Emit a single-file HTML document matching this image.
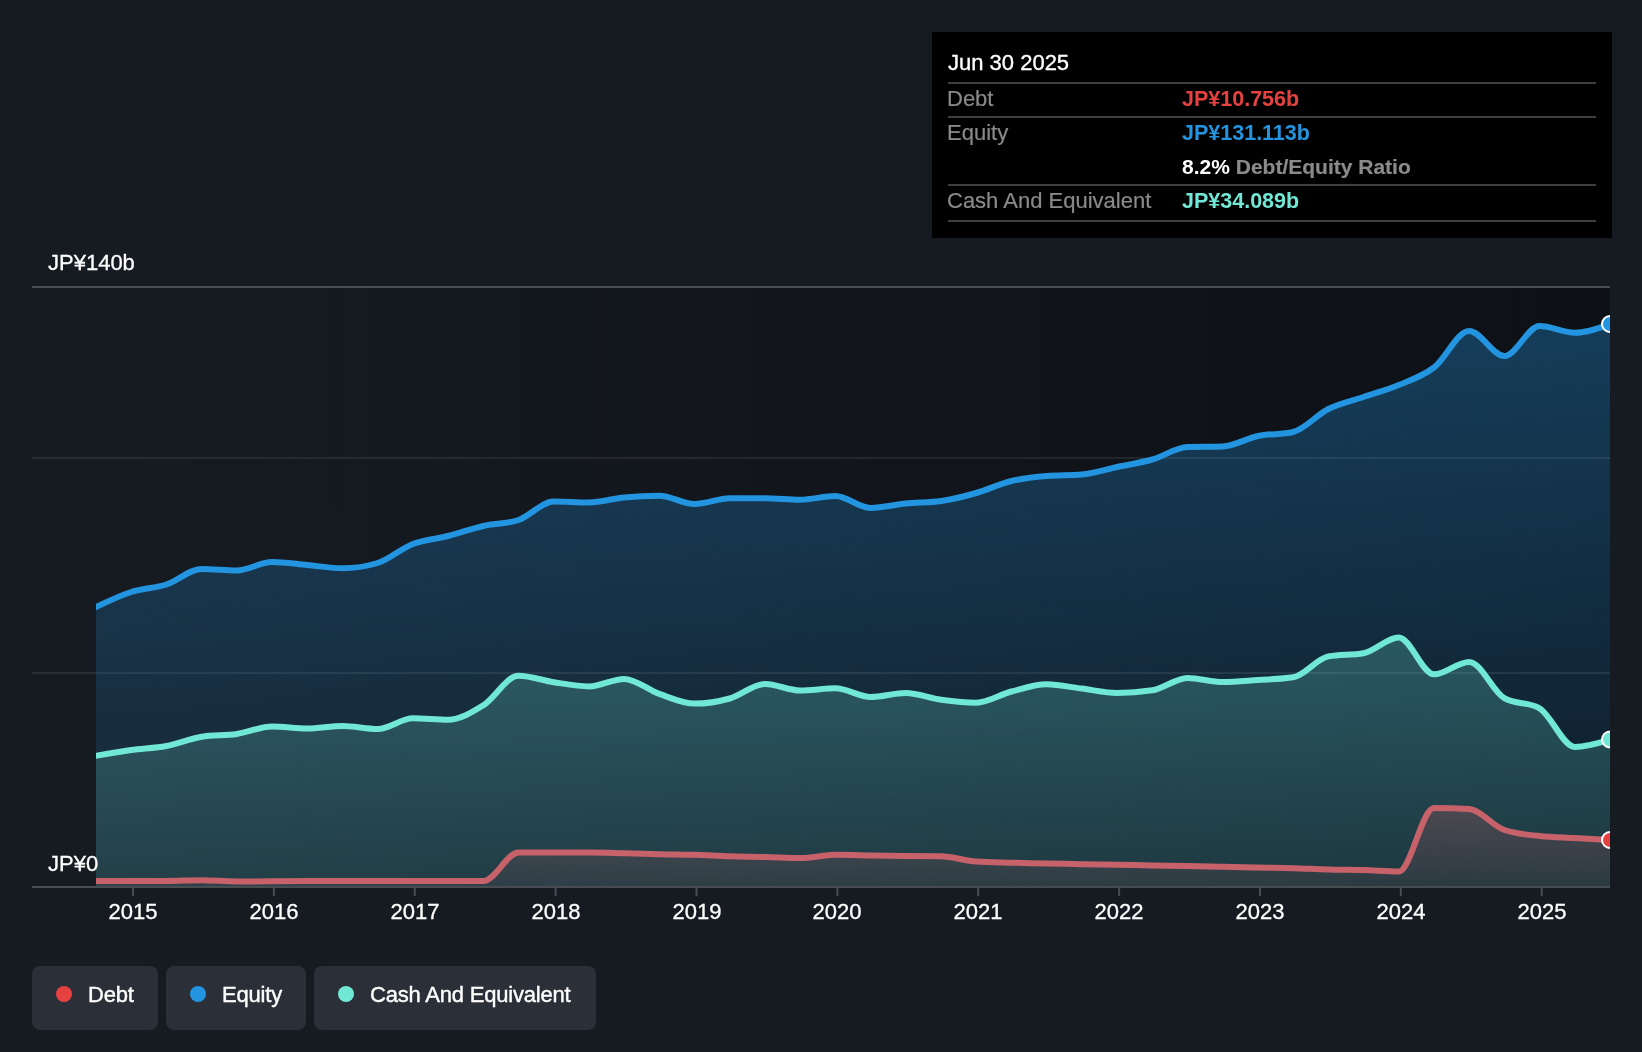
<!DOCTYPE html>
<html><head><meta charset="utf-8">
<style>
*{margin:0;padding:0;box-sizing:border-box}
html,body{width:1642px;height:1052px;overflow:hidden;background:#161b22;font-family:"Liberation Sans",sans-serif;color:#fff}
.lbl{position:absolute;white-space:nowrap;line-height:1;-webkit-text-stroke:0.3px #fff;will-change:transform}
.yl{font-size:22px;color:#fff}
.xl{font-size:22px;color:#fff;transform:translateX(-50%)}
.tt{position:absolute;left:932px;top:32px;width:680px;height:206px;background:#000}
.tt .sep{position:absolute;left:16px;width:648px;height:2px;background:#3f3f3f}
.tt .t{position:absolute;white-space:nowrap;line-height:1;font-size:22px;will-change:transform}
.g{color:#8a8a8a;-webkit-text-stroke:0.2px #8a8a8a}
.b{font-weight:bold}
.tt .v{font-size:21.5px}
.tt .r{font-size:21px}
.leg{position:absolute;top:966px;height:64px;background:#2b2f37;border-radius:8px}
.leg .dot{position:absolute;left:24px;top:20px;width:16px;height:16px;border-radius:50%}
.leg .t{position:absolute;left:56px;top:18px;font-size:22px;line-height:1;white-space:nowrap;-webkit-text-stroke:0.4px #fff;letter-spacing:-0.2px;will-change:transform}
</style></head><body>
<svg width="1642" height="1052" viewBox="0 0 1642 1052" style="position:absolute;left:0;top:0">
<defs>
<linearGradient id="pbg" x1="96" x2="1610" y1="0" y2="0" gradientUnits="userSpaceOnUse">
<stop offset="0" stop-color="#161b22"/><stop offset="1" stop-color="#0d1015"/></linearGradient>
<linearGradient id="geq" x1="0" x2="0" y1="324" y2="886" gradientUnits="userSpaceOnUse">
<stop offset="0" stop-color="#2394df" stop-opacity="0.34"/><stop offset="1" stop-color="#2394df" stop-opacity="0.08"/></linearGradient>
<linearGradient id="gcash" x1="0" x2="0" y1="637" y2="886" gradientUnits="userSpaceOnUse">
<stop offset="0" stop-color="#71e7d6" stop-opacity="0.24"/><stop offset="1" stop-color="#71e7d6" stop-opacity="0.135"/></linearGradient>
<linearGradient id="gdebt" x1="0" x2="0" y1="808" y2="886" gradientUnits="userSpaceOnUse">
<stop offset="0" stop-color="#8c505a" stop-opacity="0.40"/><stop offset="1" stop-color="#8c505a" stop-opacity="0.13"/></linearGradient>
<clipPath id="clip"><rect x="96" y="280" width="1514" height="606"/></clipPath>
</defs>
<rect x="96" y="288" width="1514" height="598" fill="url(#pbg)"/>
<g clip-path="url(#clip)">
<path d="M96.00,607.00C107.74,601.38,119.47,595.75,131.21,592.00C142.95,588.25,154.68,588.33,166.42,584.50C178.16,580.67,189.89,569.00,201.63,569.00C213.36,569.00,225.10,570.50,236.84,570.50C248.57,570.50,260.31,562.00,272.05,562.00C283.78,562.00,295.52,563.95,307.26,565.00C318.99,566.05,330.73,568.30,342.47,568.30C354.20,568.30,365.94,566.53,377.67,563.00C389.41,559.47,401.15,548.50,412.88,544.00C424.62,539.50,436.36,539.00,448.09,536.00C459.83,533.00,471.57,528.67,483.30,526.00C495.04,523.33,506.78,524.00,518.51,520.00C530.25,516.00,541.98,501.50,553.72,501.50C565.46,501.50,577.19,502.50,588.93,502.50C600.67,502.50,612.40,498.53,624.14,497.40C635.88,496.27,647.61,495.70,659.35,495.70C671.09,495.70,682.82,504.00,694.56,504.00C706.29,504.00,718.03,498.37,729.77,498.30C741.50,498.23,753.24,498.20,764.98,498.20C776.71,498.20,788.45,499.70,800.19,499.70C811.92,499.70,823.66,496.00,835.40,496.00C847.13,496.00,858.87,508.00,870.60,508.00C882.34,508.00,894.08,504.67,905.81,503.50C917.55,502.33,929.29,502.67,941.02,501.00C952.76,499.33,964.50,496.33,976.23,493.00C987.97,489.67,999.71,483.83,1011.44,481.00C1023.18,478.17,1034.91,477.00,1046.65,476.00C1058.39,475.00,1070.12,475.50,1081.86,474.50C1093.60,473.50,1105.33,469.50,1117.07,467.00C1128.81,464.50,1140.54,462.83,1152.28,459.50C1164.02,456.17,1175.75,447.33,1187.49,447.00C1199.22,446.67,1210.96,446.83,1222.70,446.50C1234.43,446.17,1246.17,438.42,1257.91,436.00C1269.64,433.58,1281.38,434.67,1293.12,432.00C1304.85,429.33,1316.59,414.83,1328.33,409.00C1340.06,403.17,1351.80,401.00,1363.53,397.00C1375.27,393.00,1387.01,389.92,1398.74,385.00C1410.48,380.08,1422.22,376.50,1433.95,367.50C1445.69,358.50,1457.43,331.00,1469.16,331.00C1480.90,331.00,1492.64,356.00,1504.37,356.00C1516.11,356.00,1527.84,326.00,1539.58,326.00C1551.32,326.00,1563.05,332.70,1574.79,332.70C1586.53,332.70,1598.26,328.35,1610.00,324.00L1610.00,886.00L96.00,886.00Z" fill="url(#geq)"/>
<path d="M96.00,755.80C107.74,753.72,119.47,751.63,131.21,750.00C142.95,748.37,154.68,748.22,166.42,746.00C178.16,743.78,189.89,738.50,201.63,736.70C213.36,734.90,225.10,735.70,236.84,734.00C248.57,732.30,260.31,726.50,272.05,726.50C283.78,726.50,295.52,728.60,307.26,728.60C318.99,728.60,330.73,726.00,342.47,726.00C354.20,726.00,365.94,729.00,377.67,729.00C389.41,729.00,401.15,718.30,412.88,718.30C424.62,718.30,436.36,719.70,448.09,719.70C459.83,719.70,471.57,712.63,483.30,705.30C495.04,697.97,506.78,675.70,518.51,675.70C530.25,675.70,541.98,680.42,553.72,682.20C565.46,683.98,577.19,686.40,588.93,686.40C600.67,686.40,612.40,678.90,624.14,678.90C635.88,678.90,647.61,689.78,659.35,693.90C671.09,698.02,682.82,703.60,694.56,703.60C706.29,703.60,718.03,701.77,729.77,698.50C741.50,695.23,753.24,684.00,764.98,684.00C776.71,684.00,788.45,690.50,800.19,690.50C811.92,690.50,823.66,688.30,835.40,688.30C847.13,688.30,858.87,697.00,870.60,697.00C882.34,697.00,894.08,693.00,905.81,693.00C917.55,693.00,929.29,698.08,941.02,699.70C952.76,701.32,964.50,702.70,976.23,702.70C987.97,702.70,999.71,694.57,1011.44,691.50C1023.18,688.43,1034.91,684.30,1046.65,684.30C1058.39,684.30,1070.12,687.17,1081.86,688.60C1093.60,690.03,1105.33,692.90,1117.07,692.90C1128.81,692.90,1140.54,692.03,1152.28,690.30C1164.02,688.57,1175.75,677.90,1187.49,677.90C1199.22,677.90,1210.96,682.10,1222.70,682.10C1234.43,682.10,1246.17,680.80,1257.91,680.00C1269.64,679.20,1281.38,679.10,1293.12,677.30C1304.85,675.50,1316.59,658.53,1328.33,656.40C1340.06,654.27,1351.80,655.33,1363.53,653.20C1375.27,651.07,1387.01,637.50,1398.74,637.50C1410.48,637.50,1422.22,674.30,1433.95,674.30C1445.69,674.30,1457.43,661.90,1469.16,661.90C1480.90,661.90,1492.64,691.47,1504.37,698.20C1516.11,704.93,1527.84,701.57,1539.58,708.30C1551.32,715.03,1563.05,746.90,1574.79,746.90C1586.53,746.90,1598.26,743.20,1610.00,739.50L1610.00,886.00L96.00,886.00Z" fill="url(#gcash)"/>
<path d="M96.00,881.00C107.74,881.00,119.47,881.00,131.21,881.00C142.95,881.00,154.68,881.00,166.42,881.00C178.16,881.00,189.89,880.20,201.63,880.20C213.36,880.20,225.10,881.50,236.84,881.50C248.57,881.50,260.31,881.38,272.05,881.30C283.78,881.22,295.52,881.00,307.26,881.00C318.99,881.00,330.73,881.00,342.47,881.00C354.20,881.00,365.94,881.00,377.67,881.00C389.41,881.00,401.15,881.00,412.88,881.00C424.62,881.00,436.36,881.00,448.09,881.00C459.83,881.00,471.57,881.00,483.30,881.00C495.04,881.00,506.78,852.60,518.51,852.60C530.25,852.60,541.98,852.60,553.72,852.60C565.46,852.60,577.19,852.60,588.93,852.60C600.67,852.60,612.40,853.03,624.14,853.30C635.88,853.57,647.61,853.95,659.35,854.20C671.09,854.45,682.82,854.45,694.56,854.80C706.29,855.15,718.03,855.95,729.77,856.30C741.50,856.65,753.24,856.60,764.98,856.90C776.71,857.20,788.45,858.10,800.19,858.10C811.92,858.10,823.66,854.80,835.40,854.80C847.13,854.80,858.87,855.20,870.60,855.40C882.34,855.60,894.08,855.85,905.81,856.00C917.55,856.15,929.29,856.10,941.02,856.30C952.76,856.50,964.50,860.70,976.23,861.50C987.97,862.30,999.71,862.37,1011.44,862.70C1023.18,863.03,1034.91,863.25,1046.65,863.50C1058.39,863.75,1070.12,863.98,1081.86,864.20C1093.60,864.42,1105.33,864.60,1117.07,864.80C1128.81,865.00,1140.54,865.20,1152.28,865.40C1164.02,865.60,1175.75,865.77,1187.49,866.00C1199.22,866.23,1210.96,866.53,1222.70,866.80C1234.43,867.07,1246.17,867.37,1257.91,867.60C1269.64,867.83,1281.38,867.88,1293.12,868.20C1304.85,868.52,1316.59,869.20,1328.33,869.50C1340.06,869.80,1351.80,869.67,1363.53,870.00C1375.27,870.33,1387.01,871.50,1398.74,871.50C1410.48,871.50,1422.22,807.90,1433.95,807.90C1445.69,807.90,1457.43,808.30,1469.16,809.10C1480.90,809.90,1492.64,826.00,1504.37,830.00C1516.11,834.00,1527.84,834.67,1539.58,836.00C1551.32,837.33,1563.05,837.33,1574.79,838.00C1586.53,838.67,1598.26,839.33,1610.00,840.00L1610.00,886.00L96.00,886.00Z" fill="url(#gdebt)"/>
</g>
<rect x="32" y="286" width="1578" height="2" fill="#474c53"/>
<rect x="32" y="457" width="1578" height="2" fill="#ffffff" fill-opacity="0.08"/>
<rect x="32" y="672" width="1578" height="2" fill="#ffffff" fill-opacity="0.08"/>
<g clip-path="url(#clip)" fill="none" stroke-width="6" stroke-linejoin="round" stroke-linecap="round">
<path d="M96.00,607.00C107.74,601.38,119.47,595.75,131.21,592.00C142.95,588.25,154.68,588.33,166.42,584.50C178.16,580.67,189.89,569.00,201.63,569.00C213.36,569.00,225.10,570.50,236.84,570.50C248.57,570.50,260.31,562.00,272.05,562.00C283.78,562.00,295.52,563.95,307.26,565.00C318.99,566.05,330.73,568.30,342.47,568.30C354.20,568.30,365.94,566.53,377.67,563.00C389.41,559.47,401.15,548.50,412.88,544.00C424.62,539.50,436.36,539.00,448.09,536.00C459.83,533.00,471.57,528.67,483.30,526.00C495.04,523.33,506.78,524.00,518.51,520.00C530.25,516.00,541.98,501.50,553.72,501.50C565.46,501.50,577.19,502.50,588.93,502.50C600.67,502.50,612.40,498.53,624.14,497.40C635.88,496.27,647.61,495.70,659.35,495.70C671.09,495.70,682.82,504.00,694.56,504.00C706.29,504.00,718.03,498.37,729.77,498.30C741.50,498.23,753.24,498.20,764.98,498.20C776.71,498.20,788.45,499.70,800.19,499.70C811.92,499.70,823.66,496.00,835.40,496.00C847.13,496.00,858.87,508.00,870.60,508.00C882.34,508.00,894.08,504.67,905.81,503.50C917.55,502.33,929.29,502.67,941.02,501.00C952.76,499.33,964.50,496.33,976.23,493.00C987.97,489.67,999.71,483.83,1011.44,481.00C1023.18,478.17,1034.91,477.00,1046.65,476.00C1058.39,475.00,1070.12,475.50,1081.86,474.50C1093.60,473.50,1105.33,469.50,1117.07,467.00C1128.81,464.50,1140.54,462.83,1152.28,459.50C1164.02,456.17,1175.75,447.33,1187.49,447.00C1199.22,446.67,1210.96,446.83,1222.70,446.50C1234.43,446.17,1246.17,438.42,1257.91,436.00C1269.64,433.58,1281.38,434.67,1293.12,432.00C1304.85,429.33,1316.59,414.83,1328.33,409.00C1340.06,403.17,1351.80,401.00,1363.53,397.00C1375.27,393.00,1387.01,389.92,1398.74,385.00C1410.48,380.08,1422.22,376.50,1433.95,367.50C1445.69,358.50,1457.43,331.00,1469.16,331.00C1480.90,331.00,1492.64,356.00,1504.37,356.00C1516.11,356.00,1527.84,326.00,1539.58,326.00C1551.32,326.00,1563.05,332.70,1574.79,332.70C1586.53,332.70,1598.26,328.35,1610.00,324.00" stroke="#2394df"/>
<path d="M96.00,755.80C107.74,753.72,119.47,751.63,131.21,750.00C142.95,748.37,154.68,748.22,166.42,746.00C178.16,743.78,189.89,738.50,201.63,736.70C213.36,734.90,225.10,735.70,236.84,734.00C248.57,732.30,260.31,726.50,272.05,726.50C283.78,726.50,295.52,728.60,307.26,728.60C318.99,728.60,330.73,726.00,342.47,726.00C354.20,726.00,365.94,729.00,377.67,729.00C389.41,729.00,401.15,718.30,412.88,718.30C424.62,718.30,436.36,719.70,448.09,719.70C459.83,719.70,471.57,712.63,483.30,705.30C495.04,697.97,506.78,675.70,518.51,675.70C530.25,675.70,541.98,680.42,553.72,682.20C565.46,683.98,577.19,686.40,588.93,686.40C600.67,686.40,612.40,678.90,624.14,678.90C635.88,678.90,647.61,689.78,659.35,693.90C671.09,698.02,682.82,703.60,694.56,703.60C706.29,703.60,718.03,701.77,729.77,698.50C741.50,695.23,753.24,684.00,764.98,684.00C776.71,684.00,788.45,690.50,800.19,690.50C811.92,690.50,823.66,688.30,835.40,688.30C847.13,688.30,858.87,697.00,870.60,697.00C882.34,697.00,894.08,693.00,905.81,693.00C917.55,693.00,929.29,698.08,941.02,699.70C952.76,701.32,964.50,702.70,976.23,702.70C987.97,702.70,999.71,694.57,1011.44,691.50C1023.18,688.43,1034.91,684.30,1046.65,684.30C1058.39,684.30,1070.12,687.17,1081.86,688.60C1093.60,690.03,1105.33,692.90,1117.07,692.90C1128.81,692.90,1140.54,692.03,1152.28,690.30C1164.02,688.57,1175.75,677.90,1187.49,677.90C1199.22,677.90,1210.96,682.10,1222.70,682.10C1234.43,682.10,1246.17,680.80,1257.91,680.00C1269.64,679.20,1281.38,679.10,1293.12,677.30C1304.85,675.50,1316.59,658.53,1328.33,656.40C1340.06,654.27,1351.80,655.33,1363.53,653.20C1375.27,651.07,1387.01,637.50,1398.74,637.50C1410.48,637.50,1422.22,674.30,1433.95,674.30C1445.69,674.30,1457.43,661.90,1469.16,661.90C1480.90,661.90,1492.64,691.47,1504.37,698.20C1516.11,704.93,1527.84,701.57,1539.58,708.30C1551.32,715.03,1563.05,746.90,1574.79,746.90C1586.53,746.90,1598.26,743.20,1610.00,739.50" stroke="#71e7d6"/>
<path d="M96.00,881.00C107.74,881.00,119.47,881.00,131.21,881.00C142.95,881.00,154.68,881.00,166.42,881.00C178.16,881.00,189.89,880.20,201.63,880.20C213.36,880.20,225.10,881.50,236.84,881.50C248.57,881.50,260.31,881.38,272.05,881.30C283.78,881.22,295.52,881.00,307.26,881.00C318.99,881.00,330.73,881.00,342.47,881.00C354.20,881.00,365.94,881.00,377.67,881.00C389.41,881.00,401.15,881.00,412.88,881.00C424.62,881.00,436.36,881.00,448.09,881.00C459.83,881.00,471.57,881.00,483.30,881.00C495.04,881.00,506.78,852.60,518.51,852.60C530.25,852.60,541.98,852.60,553.72,852.60C565.46,852.60,577.19,852.60,588.93,852.60C600.67,852.60,612.40,853.03,624.14,853.30C635.88,853.57,647.61,853.95,659.35,854.20C671.09,854.45,682.82,854.45,694.56,854.80C706.29,855.15,718.03,855.95,729.77,856.30C741.50,856.65,753.24,856.60,764.98,856.90C776.71,857.20,788.45,858.10,800.19,858.10C811.92,858.10,823.66,854.80,835.40,854.80C847.13,854.80,858.87,855.20,870.60,855.40C882.34,855.60,894.08,855.85,905.81,856.00C917.55,856.15,929.29,856.10,941.02,856.30C952.76,856.50,964.50,860.70,976.23,861.50C987.97,862.30,999.71,862.37,1011.44,862.70C1023.18,863.03,1034.91,863.25,1046.65,863.50C1058.39,863.75,1070.12,863.98,1081.86,864.20C1093.60,864.42,1105.33,864.60,1117.07,864.80C1128.81,865.00,1140.54,865.20,1152.28,865.40C1164.02,865.60,1175.75,865.77,1187.49,866.00C1199.22,866.23,1210.96,866.53,1222.70,866.80C1234.43,867.07,1246.17,867.37,1257.91,867.60C1269.64,867.83,1281.38,867.88,1293.12,868.20C1304.85,868.52,1316.59,869.20,1328.33,869.50C1340.06,869.80,1351.80,869.67,1363.53,870.00C1375.27,870.33,1387.01,871.50,1398.74,871.50C1410.48,871.50,1422.22,807.90,1433.95,807.90C1445.69,807.90,1457.43,808.30,1469.16,809.10C1480.90,809.90,1492.64,826.00,1504.37,830.00C1516.11,834.00,1527.84,834.67,1539.58,836.00C1551.32,837.33,1563.05,837.33,1574.79,838.00C1586.53,838.67,1598.26,839.33,1610.00,840.00" stroke="#c7626a"/>
<circle cx="1610" cy="324.0" r="8" fill="#2394df" stroke="#fff" stroke-width="2"/>
<circle cx="1610" cy="739.5" r="8" fill="#71e7d6" stroke="#fff" stroke-width="2"/>
<circle cx="1610" cy="840.0" r="8" fill="#e64141" stroke="#fff" stroke-width="2"/>
</g>
<rect x="32" y="886" width="1578" height="2" fill="#474c53"/>
<rect x="132.0" y="888" width="2" height="8" fill="#474c53"/>
<rect x="272.9" y="888" width="2" height="8" fill="#474c53"/>
<rect x="413.7" y="888" width="2" height="8" fill="#474c53"/>
<rect x="554.6" y="888" width="2" height="8" fill="#474c53"/>
<rect x="695.5" y="888" width="2" height="8" fill="#474c53"/>
<rect x="836.4" y="888" width="2" height="8" fill="#474c53"/>
<rect x="977.2" y="888" width="2" height="8" fill="#474c53"/>
<rect x="1118.1" y="888" width="2" height="8" fill="#474c53"/>
<rect x="1259.0" y="888" width="2" height="8" fill="#474c53"/>
<rect x="1399.8" y="888" width="2" height="8" fill="#474c53"/>
<rect x="1540.7" y="888" width="2" height="8" fill="#474c53"/>
</svg>
<div class="lbl yl" style="left:48px;top:252px">JP¥140b</div>
<div class="lbl yl" style="left:48px;top:853px">JP¥0</div>
<div class="lbl xl" style="left:133.0px;top:901px">2015</div>
<div class="lbl xl" style="left:273.9px;top:901px">2016</div>
<div class="lbl xl" style="left:414.7px;top:901px">2017</div>
<div class="lbl xl" style="left:555.6px;top:901px">2018</div>
<div class="lbl xl" style="left:696.5px;top:901px">2019</div>
<div class="lbl xl" style="left:837.4px;top:901px">2020</div>
<div class="lbl xl" style="left:978.2px;top:901px">2021</div>
<div class="lbl xl" style="left:1119.1px;top:901px">2022</div>
<div class="lbl xl" style="left:1260.0px;top:901px">2023</div>
<div class="lbl xl" style="left:1400.8px;top:901px">2024</div>
<div class="lbl xl" style="left:1541.7px;top:901px">2025</div>
<div class="tt">
  <div class="t" style="left:16px;top:20px;-webkit-text-stroke:0.35px #fff">Jun 30 2025</div>
  <div class="sep" style="top:50px"></div>
  <div class="t g" style="left:15px;top:56px">Debt</div>
  <div class="t b v" style="left:250px;top:57px;color:#e64141">JP¥10.756b</div>
  <div class="sep" style="top:84px"></div>
  <div class="t g" style="left:15px;top:90px">Equity</div>
  <div class="t b v" style="left:250px;top:91px;color:#2394df">JP¥131.113b</div>
  <div class="t r" style="left:250px;top:124px"><span class="b">8.2%</span> <span class="g b">Debt/Equity Ratio</span></div>
  <div class="sep" style="top:152px"></div>
  <div class="t g" style="left:15px;top:158px">Cash And Equivalent</div>
  <div class="t b v" style="left:250px;top:159px;color:#71e7d6">JP¥34.089b</div>
  <div class="sep" style="top:188px"></div>
</div>
<div class="leg" style="left:32px;width:126px"><div class="dot" style="background:#e64141"></div><div class="t">Debt</div></div>
<div class="leg" style="left:166px;width:140px"><div class="dot" style="background:#2394df"></div><div class="t">Equity</div></div>
<div class="leg" style="left:314px;width:282px"><div class="dot" style="background:#71e7d6"></div><div class="t">Cash And Equivalent</div></div>
</body></html>
